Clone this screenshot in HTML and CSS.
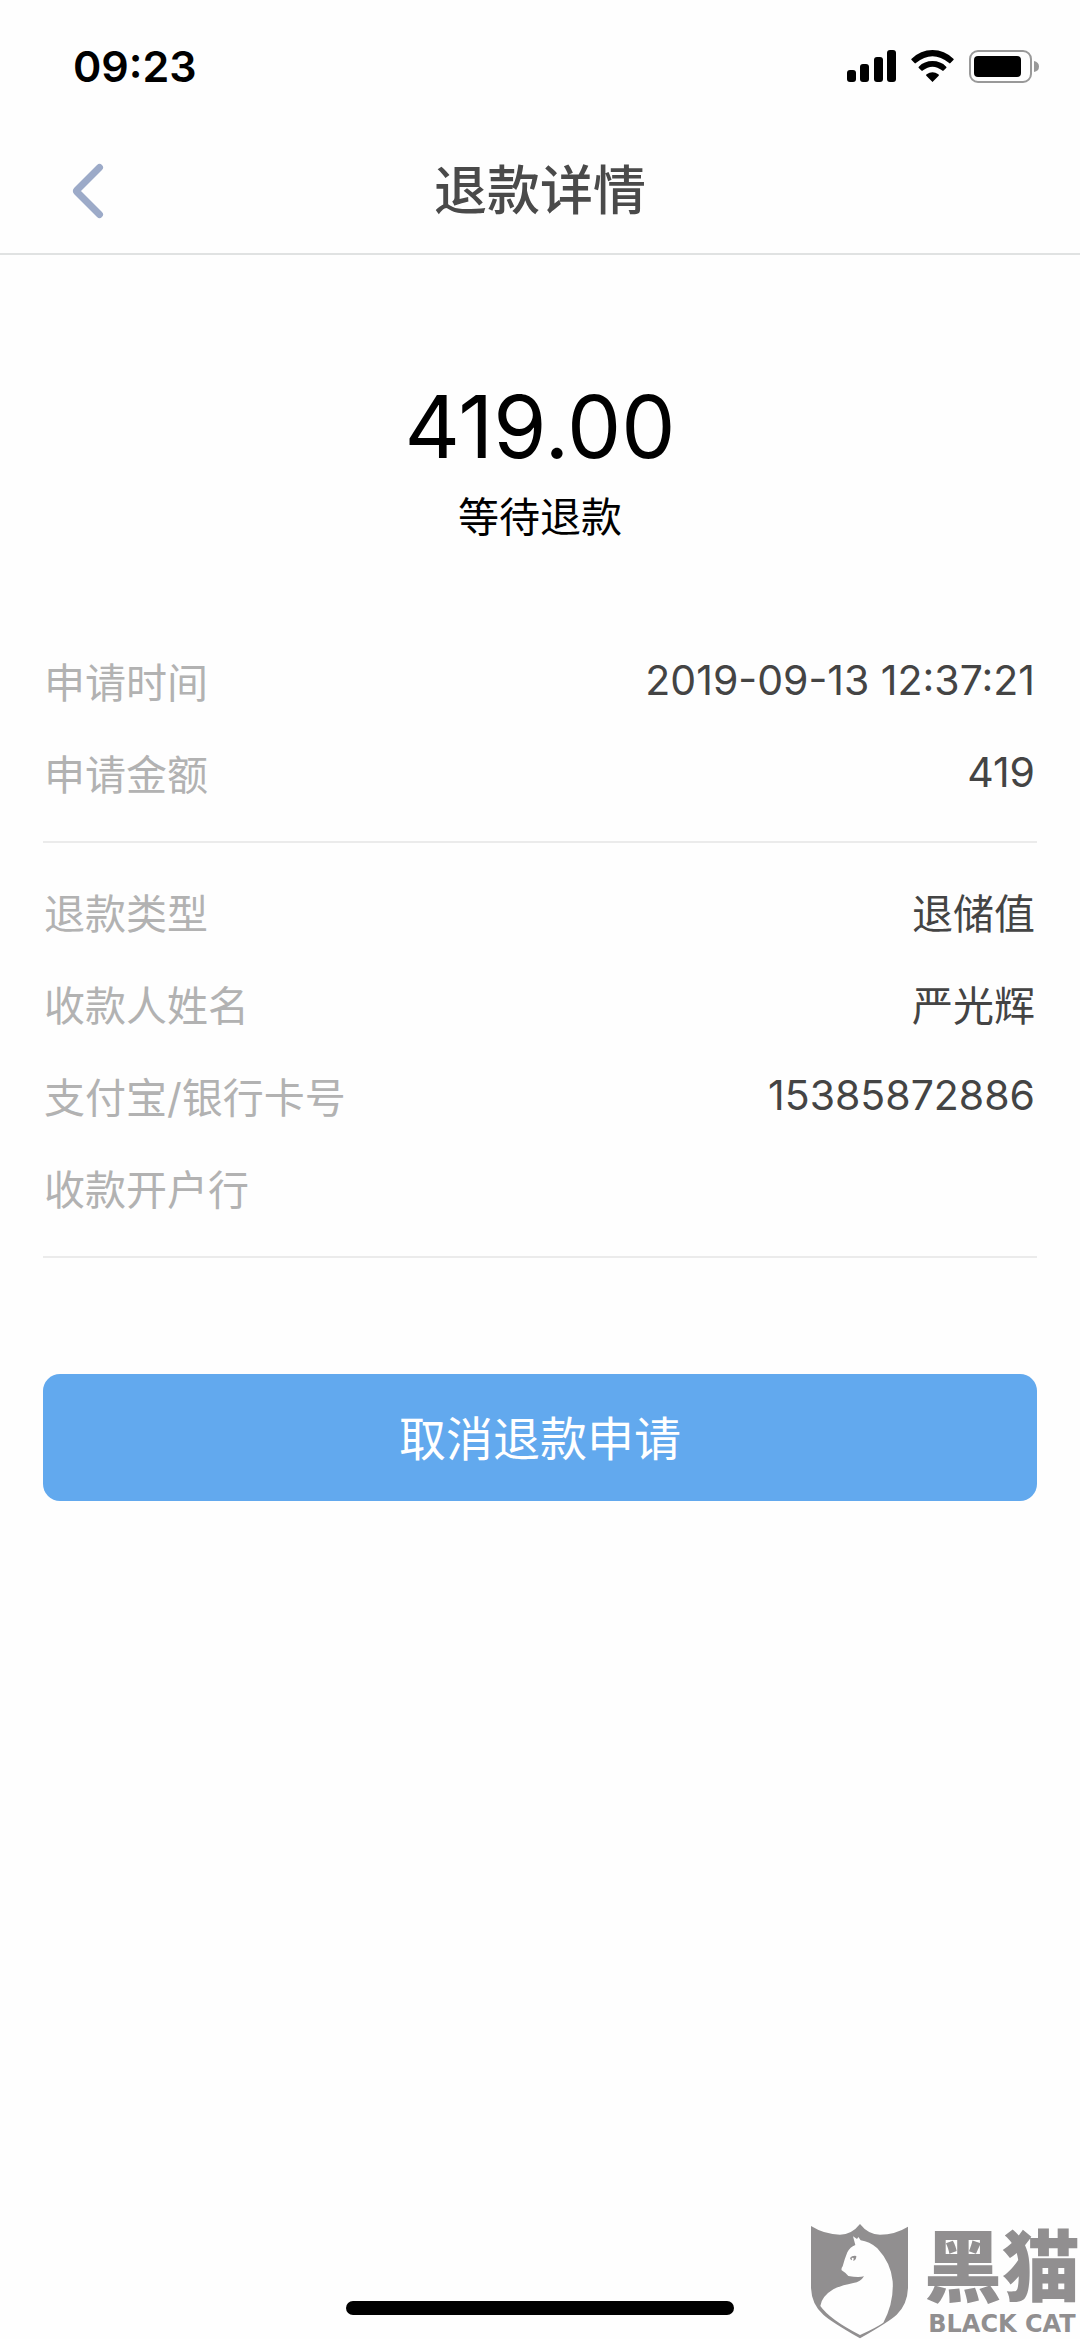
FILE: index.html
```html
<!DOCTYPE html>
<html lang="zh-CN">
<head>
<meta charset="utf-8">
<meta name="viewport" content="width=device-width, initial-scale=1">
<title>退款详情</title>
<link rel="stylesheet" href="styles.css">
</head>
<body>
<div class="status-bar">
  <time class="clock">09:23</time>
  <div class="indicators">
    <svg class="signal" viewBox="0 0 49 32" aria-hidden="true">
      <rect x="0" y="20" width="9" height="12" rx="3"/>
      <rect x="13" y="14" width="9" height="18" rx="3"/>
      <rect x="27" y="7" width="9" height="25" rx="3"/>
      <rect x="40" y="0" width="9" height="32" rx="3"/>
    </svg>
    <svg class="wifi" viewBox="0 0 130 98" aria-hidden="true">
      <path d="M65 98 46 79Q44 76 47 74Q65 62 83 74Q86 76 84 79Z"/>
      <path d="M65 34Q90 34 107 51Q109 53 107 55L99 63Q97 65 95 63Q65 39 35 63Q33 65 31 63L23 55Q21 53 23 51Q40 34 65 34Z"/>
      <path d="M65 0Q102 0 129 27Q131 29 129 31L120 40Q118 42 116 40Q65-2 14 40Q12 42 10 40L1 31Q-1 29 1 27Q28 0 65 0Z"/>
    </svg>
    <svg class="battery" viewBox="0 0 70 33" aria-hidden="true">
      <rect class="battery-case" x="1" y="1" width="61" height="31" rx="8"/>
      <rect x="5" y="6" width="47" height="21" rx="4"/>
      <path class="battery-tip" d="M65 11Q70 12 70 16.500Q70 21 65 22Z"/>
    </svg>
  </div>
</div>
<header class="nav">
  <button class="back" type="button" aria-label="返回">
    <svg viewBox="0 0 32 56" aria-hidden="true"><path d="M27.500 4.500 5 27Q4 28 5 29L27.500 51.500"/></svg>
  </button>
  <h1 class="title">退款详情</h1>
</header>
<main class="content">
  <section class="summary">
    <p class="amount">419.00</p>
    <p class="state">等待退款</p>
  </section>
  <dl class="group">
    <div class="row"><dt>申请时间</dt><dd>2019-09-13 12:37:21</dd></div>
    <div class="row"><dt>申请金额</dt><dd>419</dd></div>
  </dl>
  <dl class="group">
    <div class="row"><dt>退款类型</dt><dd>退储值</dd></div>
    <div class="row"><dt>收款人姓名</dt><dd>严光辉</dd></div>
    <div class="row"><dt>支付宝/银行卡号</dt><dd>15385872886</dd></div>
    <div class="row"><dt>收款开户行</dt><dd></dd></div>
  </dl>
  <button class="cancel" type="button">取消退款申请</button>
</main>
<footer class="home-area"><div class="home-bar"></div></footer>
<div class="watermark">
  <svg class="shield" viewBox="60 70 300 348" aria-hidden="true">
    <path class="shield-body" d="M63 79Q105 105 150 105Q185 105 210 73Q235 105 270 105Q315 105 354 81V265Q352 315 320 345Q300 364 210 416Q120 364 100 345Q65 315 63 265Z"/>
    <path class="cat" d="M189 110 201 118 205 112 212 122Q238 125 262 146Q303 190 308 245Q312 310 280 369Q262 382 210 406Q120 360 91 319Q95 290 130 269Q150 258 190 250Q212 247 222 230Q205 234 175 229Q168 220 155 212Q153 207 158 200Q163 180 172 158Q180 142 196 136Z"/>
    <path class="eye" d="M180 175Q186 167 199 169Q199 181 190 184L191 175 185 174 186 182Q181 181 180 175Z"/>
  </svg>
  <div class="brand">
    <span class="brand-cn">黑猫</span>
    <span class="brand-en">BLACK CAT</span>
  </div>
</div>
</body>
</html>
```
FILE: styles.css
```css
* { box-sizing: border-box; }

body {
  margin: 0;
  min-height: 100vh;
  display: flex;
  flex-direction: column;
  position: relative;
  background: #fefefe;
  color: #000;
  font-family: Inter, "Noto Sans CJK SC", sans-serif;
  font-size: 41px;
}

h1, p, dl, dd { margin: 0; }

button {
  border: 0;
  font-family: inherit;
  cursor: pointer;
}

svg { display: block; }

.status-bar {
  height: 132px;
  padding: 0 41px 0 73px;
  display: flex;
  align-items: center;
  justify-content: space-between;
}

.clock {
  font-size: 43px;
  font-weight: 600;
  line-height: 52px;
}

.indicators {
  display: flex;
  align-items: center;
  gap: 15px;
}

.signal { width: 49px; height: 32px; }
.wifi { width: 43px; height: 32px; }
.battery { width: 70px; height: 33px; }
.battery-case { fill: none; stroke: #999; stroke-width: 2; }
.battery-tip { fill: #999; }

.nav {
  height: 123px;
  padding: 0 72px 4px;
  display: grid;
  grid-template-columns: 32px 1fr 32px;
  align-items: center;
  border-bottom: 2px solid #e0e2e2;
}

.back {
  padding: 0;
  background: none;
}

.back svg {
  width: 32px;
  height: 56px;
  fill: none;
  stroke: #9caac8;
  stroke-width: 7;
  stroke-linecap: round;
}

.title {
  font-size: 53px;
  font-weight: 500;
  line-height: 72px;
  text-align: center;
  color: #4a4a4a;
}

.content {
  flex: 1;
  padding: 116px 43px 0;
}

.summary {
  padding-bottom: 61px;
  text-align: center;
}

.amount {
  font-size: 86px;
  line-height: 112px;
}

.state { line-height: 68px; }

.group {
  padding: 23px 0 22px;
  border-bottom: 2px solid #ebebeb;
}

.row {
  height: 92px;
  padding: 0 2px 2px 1px;
  display: flex;
  align-items: center;
  justify-content: space-between;
}

dt { color: #b2b2b2; }

dd { color: #444; }

.cancel {
  width: 100%;
  height: 127px;
  margin-top: 116px;
  padding: 0 0 5px;
  border-radius: 17px;
  background: #62a9ee;
  color: #fff;
  font-size: 47px;
}

.home-area {
  padding-bottom: 24px;
  display: flex;
  justify-content: center;
}

.home-bar {
  width: 36%;
  height: 14px;
  border-radius: 7px;
  background: #000;
}

.watermark {
  position: absolute;
  right: 0;
  bottom: 0;
  display: flex;
  gap: 14px;
  color: #918f90;
}

.shield { width: 100px; height: 116px; }
.shield-body, .eye { fill: #918f90; }
.cat { fill: #fefefe; }

.brand {
  display: flex;
  flex-direction: column;
  align-items: center;
  justify-content: flex-end;
}

.brand-cn {
  font-size: 78px;
  font-weight: 900;
  line-height: 82px;
}

.brand-en {
  font-family: "DejaVu Sans", sans-serif;
  font-size: 24px;
  font-weight: 700;
  line-height: 30px;
}
```
